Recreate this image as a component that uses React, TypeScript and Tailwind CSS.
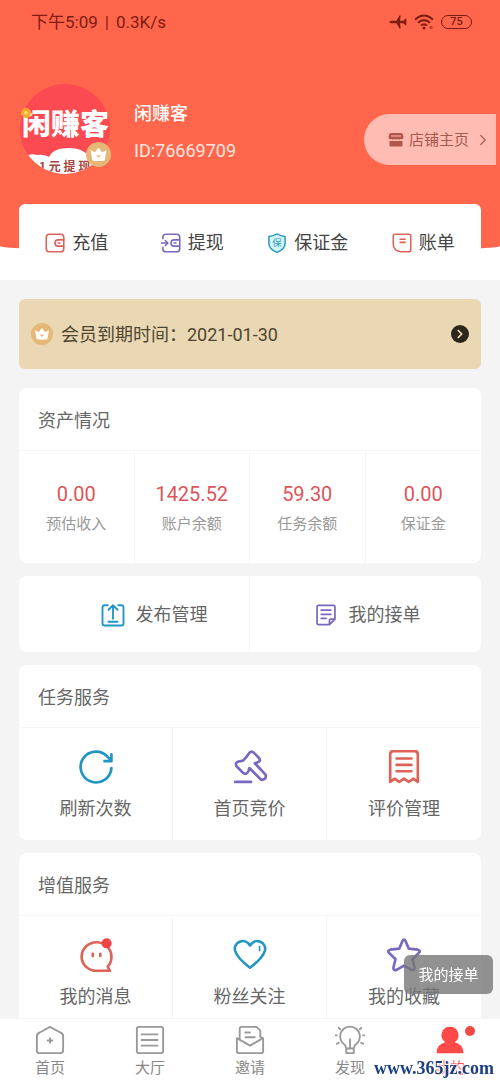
import type { ReactNode } from "react";
import { ChevronRight } from "lucide-react";

const RED = "#dd6258";
const BLUE = "#2196c4";
const PURPLE = "#7a68c0";

function Crown({ className }: { className: string }) {
  return (
    <svg viewBox="0 0 24 24" className={className} aria-hidden="true">
      <circle cx="12" cy="12" r="12" fill="#e6b877" />
      <path d="M5 8.5l3.6 2.2L12 6l3.4 4.7L19 8.5l-1.5 8.7q-5.500 1-11 0z" fill="#fff" stroke="#fff" strokeLinejoin="round" />
      <path d="M10.300 12.600l1.700 1.700 1.700-1.700" fill="none" stroke="#e6b877" strokeWidth="1.300" />
    </svg>
  );
}

function Avatar() {
  return (
    <div className="relative h-[90px] w-[90px] shrink-0">
      <svg viewBox="0 0 90 90" className="h-full w-full overflow-visible" role="img" aria-label="闲赚客">
        <defs>
          <clipPath id="avatar"><circle cx="45" cy="45" r="45" /></clipPath>
        </defs>
        <g clipPath="url(#avatar)">
          <rect width="90" height="90" fill="#fb4a51" />
          <path d="M6 72q5-3 11-1 7-1 12 2 4-9 20-9 14 0 19 8 8-5 22 0v20H0z" fill="#fff" />
          <text x="19" y="87" fontSize="12" fontWeight="700" fill="#a8433c" className="font-['Noto_Sans_CJK_SC',sans-serif]">1 元 提 现</text>
        </g>
        <text x="2" y="51" fontSize="29" fontWeight="900" fill="#fff" className="font-['Noto_Sans_CJK_SC',sans-serif]">闲赚客</text>
        <circle cx="6" cy="29" r="5" fill="#f3a72f" />
        <circle cx="6" cy="29" r="2" fill="#ffd768" />
      </svg>
      <Crown className="absolute -right-px bottom-[7px] h-[25px] w-[25px]" />
    </div>
  );
}

function Icon({ color, size, children, width = 2 }: { color: string; size: string; children: ReactNode; width?: number }) {
  return (
    <svg viewBox="0 0 32 32" className={size} fill="none" stroke={color} strokeWidth={width} strokeLinecap="round" strokeLinejoin="round" aria-hidden="true">
      {children}
    </svg>
  );
}

const quick = [
  {
    label: "充值",
    icon: (
      <Icon color={RED} size="size-5" width={2.5}>
        <rect x="2" y="2" width="28" height="28" rx="5" />
        <path d="M30 11h-9a5 5 0 0 0 0 10h9M21 16h3" />
      </Icon>
    ),
  },
  {
    label: "提现",
    icon: (
      <Icon color={PURPLE} size="size-5" width={2.5}>
        <path d="M3 9V7q0-5 5-5h17q5 0 5 5v18q0 5-5 5H8q-5 0-5-5v-2M0 16h10M7 12l4 4-4 4M30 11h-9a5 5 0 0 0 0 10h9M21 16h3" />
      </Icon>
    ),
  },
  {
    label: "保证金",
    icon: (
      <svg viewBox="0 0 32 32" className="size-5" aria-hidden="true">
        <path d="M16 1.500Q22 5 29 5.500V16q0 10-13 15Q3 26 3 16V5.500Q10 5 16 1.500z" fill="#d3f3fb" stroke="#2f9dba" strokeWidth="2.500" strokeLinejoin="round" />
        <text x="16" y="21" fontSize="15" textAnchor="middle" fill="#2f9dba" className="font-['Noto_Sans_CJK_SC',sans-serif]">保</text>
      </svg>
    ),
  },
  {
    label: "账单",
    icon: (
      <Icon color={RED} size="size-5" width={2.5}>
        <path d="M5 2h22q3 0 3 3v22q0 3-3 3H14Q2 28 2 17V5q0-3 3-3z" />
        <path d="M13 10h8M13 15h8" />
      </Icon>
    ),
  },
];

const assets = [
  { value: "0.00", label: "预估收入" },
  { value: "1425.52", label: "账户余额" },
  { value: "59.30", label: "任务余额" },
  { value: "0.00", label: "保证金" },
];

const taskServices = [
  {
    label: "刷新次数",
    icon: (
      <Icon color={BLUE} size="size-[34px]" width={2.5}>
        <path d="M30.500 17A14.500 14.500 0 1 1 27 6.500l3 3M30.500 4v6.500H24" />
      </Icon>
    ),
  },
  {
    label: "首页竞价",
    icon: (
      <Icon color={PURPLE} size="size-[34px]" width={2.5}>
        <path d="M15.500 2.500q2-2 4 0l5 5q2 3-1 4l-3 1 9.500 10q2 2 0 4.500-2.500 2-4.500 0L15.500 17l-1 3q-2 4-5 1.500l-6-6q-2-3 1-4.500l5-1q3-3 6-7.500zM2 30h15" />
      </Icon>
    ),
  },
  {
    label: "评价管理",
    icon: (
      <Icon color={RED} size="size-[34px]" width={2.5}>
        <path d="M3 30V4q0-3 3-3h20q3 0 3 3v26l-4-3-4.500 3-4.500-3-4.500 3L7 27zM9 8h14M9 14h14M9 20h14" />
      </Icon>
    ),
  },
];

const extraServices = [
  {
    label: "我的消息",
    icon: (
      <Icon color={RED} size="size-[34px]" width={2.5}>
        <path d="M27 27q3.500-4 3.500-9A14 13.500 0 1 0 16 31h13z" />
        <path d="M13 15v2M20 15v2" />
        <circle cx="26" cy="5" r="4" fill="#f04444" stroke="#f04444" strokeWidth="1.500" />
      </Icon>
    ),
  },
  {
    label: "粉丝关注",
    icon: (
      <Icon color={BLUE} size="size-[34px]" width={2.5}>
        <path d="M16 28Q4 19 2 12C0 4 11-1 16 7c5-8 16-3 14 5q-2 7-14 16z" />
        <path d="M25 8v4" strokeWidth="1.500" />
      </Icon>
    ),
  },
  {
    label: "我的收藏",
    icon: (
      <Icon color={PURPLE} size="size-[34px]" width={2.5}>
        <path d="M14.500 3q1.500-3 3 0l3 7 8.500 1q3 1 1 3l-6 6 2 8q0 3-3 2l-7-4-7 4q-3 1-3-2l2-8-6-6q-2-2 1-3l8.500-1z" />
      </Icon>
    ),
  },
];

const tabs = [
  { label: "首页", path: <path d="M4 30q-2 0-2-3V12q0-3 3-4l11-6 11 6q3 1 3 4v15q0 3-3 3zM16 14v5M13.500 16.500h5" /> },
  { label: "大厅", path: <path d="M4 2h24q2 0 2 2v24q0 2-2 2H4q-2 0-2-2V4q0-2 2-2zM7 10h17M7 16h17M7 22h17" /> },
  { label: "邀请", path: <path d="M5 14V4q0-2 2-2h16l4 4v7l3 1v14q0 2-2 2H4q-2 0-2-2V14l14 8 14-8M11 8h5M11 13h10" /> },
  { label: "发现", path: <path d="M12 25q-1-4-4-6A10.500 10.500 0 1 1 24 19q-3 2-4 6zM12 25v5h8v-5M16 15v9M4 3l1.500 1.500M28 3l-1.500 1.500M0 11h2M30 11h2M2 20l2-1M30 20l-2-1" /> },
];

function Card({ children }: { children: ReactNode }) {
  return <section className="mx-[19px] overflow-hidden rounded-lg bg-white">{children}</section>;
}

function CardTitle({ children }: { children: ReactNode }) {
  return <h2 className="flex h-[62px] items-center px-[19px] pt-[3px] text-lg text-[#666]">{children}</h2>;
}

function ServiceGrid({ items }: { items: typeof taskServices }) {
  return (
    <div className="grid grid-cols-3 divide-x divide-[#f5f5f5] border-t border-[#f5f5f5]">
      {items.map(s => (
        <button key={s.label} className="flex h-28 flex-col items-center gap-[11px] pt-[22px]">
          {s.icon}
          <span className="text-lg text-[#666]">{s.label}</span>
        </button>
      ))}
    </div>
  );
}

export default function App() {
  return (
    <div className="min-h-screen bg-[#f4f4f4] pb-10 font-[Roboto,'Noto_Sans_CJK_SC',sans-serif]">
      <header className="bg-white">
        <div className="h-[252px] rounded-b-[50%_6px] bg-[#ff664c]">
          <div className="flex h-11 items-center justify-between pr-7 pl-[31px] text-[#7d1c12]">
            <div className="flex items-center gap-[7px] pt-0.5 text-[17px]">
              <span>下午5:09</span>
              <span>|</span>
              <span>0.3K/s</span>
            </div>
            <div className="flex items-center gap-[7px]">
              <svg viewBox="0 0 18 16" className="h-4 w-[18px]" fill="currentColor" aria-hidden="true">
                <path d="M0 8q1-1.200 3-1.200h4.500L10.500 1.500h1.200L11 6.800h3.600l1.800-2h.9V11.200h-.9l-1.800-2H11l.7 5.300h-1.200L7.500 9.200H3Q1 9.200 0 8z" />
              </svg>
              <svg viewBox="0 0 20 16" className="h-4 w-5" fill="none" stroke="currentColor" strokeWidth="2" aria-hidden="true">
                <path d="M1 5.500Q10-2.500 19 5.500M4 8.700Q10 3.500 16 8.700M7 11.500Q10 9 13 11.500" />
                <circle cx="10" cy="14" r="1.500" fill="currentColor" stroke="none" />
                <circle cx="17" cy="13.500" r="1.500" fill="currentColor" stroke="none" opacity=".6" />
              </svg>
              <span className="flex h-3.5 w-[31px] items-center justify-center rounded-full border border-current text-[11px] font-medium">75</span>
            </div>
          </div>
          <div className="flex pt-10 pr-1 pl-5">
            <Avatar />
            <div className="ml-6 flex flex-1 flex-col gap-3 pt-[17px] text-white">
              <h1 className="text-lg leading-[26px] font-medium">闲赚客</h1>
              <p className="text-lg leading-6 text-[#ffe6df]">ID:76669709</p>
            </div>
            <button className="mt-[30px] flex h-[51px] w-[132px] items-center rounded-l-full bg-[#ffbcb2] pl-6 text-[#a4594f]">
              <svg viewBox="0 0 16 16" className="size-4" fill="#b0564c" aria-hidden="true">
                <path d="M3 1h10q2 0 2 2l.5 3q-1 2-2.700 1Q11 8 9.500 7 8 8 6.500 7 5 8 3.200 7 1.500 8 .5 6L1 3q0-2 2-2zM1.500 9h13v4q0 1.500-1.500 1.500H3q-1.500 0-1.500-1.500z" />
                <path d="M3 4h10" stroke="#ffbcb2" />
              </svg>
              <span className="ml-[5px] flex-1 pt-0.5 text-left text-[15px]">店铺主页</span>
              <ChevronRight size={18} strokeWidth={1.5} className="mr-1" />
            </button>
          </div>
        </div>
        <nav className="relative mx-[19px] -mt-12 grid h-[76px] grid-cols-4 rounded-t-md bg-white pt-0.5">
          {quick.map(q => (
            <button key={q.label} className="flex items-center justify-center gap-[7px] text-lg text-[#444]">
              {q.icon}
              {q.label}
            </button>
          ))}
        </nav>
      </header>

      <main>
        <button className="mx-[19px] mt-[19px] flex h-[70px] w-[calc(100%-38px)] items-center rounded-md bg-[#e9d8b3] pr-3 pl-3 text-lg text-[#4f4530]">
          <Crown className="size-[22px]" />
          <span className="ml-2 flex-1 pt-0.5 text-left">会员到期时间：2021-01-30</span>
          <span className="flex size-[18px] items-center justify-center rounded-full bg-[#2c251c] text-[#efe0c0]">
            <ChevronRight size={14} strokeWidth={3} />
          </span>
        </button>

        <div className="mt-[19px] flex flex-col gap-[13px]">
          <Card>
            <CardTitle>资产情况</CardTitle>
            <dl className="grid grid-cols-4 divide-x divide-[#f5f5f5] border-t border-[#f5f5f5]">
              {assets.map((a, i) => (
                <div key={i} className="flex h-28 flex-col-reverse items-center justify-center gap-1 pt-0.5">
                  <dt className="text-[15px] leading-6 text-[#999]">{a.label}</dt>
                  <dd className="text-xl leading-7 text-[#dc5558]">{a.value}</dd>
                </div>
              ))}
            </dl>
          </Card>

          <Card>
            <div className="grid h-[76px] grid-cols-2 divide-x divide-[#f5f5f5] text-lg text-[#666]">
              <button className="flex items-center justify-center gap-[11px] pt-0.5 pl-10">
                <Icon color={BLUE} size="size-6" width={2.5}>
                  <path d="M9 3H5Q2 3 2 6v21q0 3 3 3h22q3 0 3-3V6q0-3-3-3h-4M16 21V3M10 9l6-6 6 6M10 25h12" />
                </Icon>
                发布管理
              </button>
              <button className="flex items-center justify-center gap-3 pt-0.5 pl-1">
                <Icon color={PURPLE} size="size-[22px]" width={2.5}>
                  <path d="M5 2h22q2 0 2 2v18l-8 8H5q-2 0-2-2V4q0-2 2-2zM29 22h-6q-2 0-2 2v6M9 9h14M9 15h14M9 21h7" />
                </Icon>
                我的接单
              </button>
            </div>
          </Card>

          <Card>
            <CardTitle>任务服务</CardTitle>
            <ServiceGrid items={taskServices} />
          </Card>

          <Card>
            <CardTitle>增值服务</CardTitle>
            <ServiceGrid items={extraServices} />
          </Card>
        </div>
      </main>

      <nav className="fixed inset-x-0 bottom-0 grid h-[65px] grid-cols-5 border-t border-[#f5f5f5] bg-white text-[15px] text-[#888]">
        {tabs.map(t => (
          <a key={t.label} href="#" className="flex flex-col items-center gap-0.5 pt-1.5">
            <Icon color="#999" size="size-[30px]">{t.path}</Icon>
            {t.label}
          </a>
        ))}
        <a href="#" className="relative flex flex-col items-center gap-0.5 pt-1.5 text-[#ff4a48]">
          <svg viewBox="0 0 32 32" className="size-[30px]" fill="currentColor" aria-hidden="true">
            <path d="M16 2a9 9 0 0 1 5 16.500q9 2 9.500 11.500h-29Q2 20.500 11 18.500A9 9 0 0 1 16 2z" />
          </svg>
          我的
          <span className="absolute top-[7px] right-[25px] size-2.5 rounded-full bg-[#f04a48]" />
        </a>
      </nav>

      <div className="fixed right-[7px] bottom-[89px] flex h-[39px] w-[89px] items-center justify-center rounded-md bg-[#777]/80 pt-0.5 text-[15px] text-white">我的接单</div>
      <a
        href="#"
        className="fixed right-1.5 bottom-[3px] font-['Liberation_Serif',serif] text-lg leading-6 font-bold text-[#1b3f82] [text-shadow:0_0_2px_#fff,0_0_2px_#fff,0_0_3px_#fff,0_0_4px_#fff]"
      >
        www.365jz.com
      </a>
    </div>
  );
}
